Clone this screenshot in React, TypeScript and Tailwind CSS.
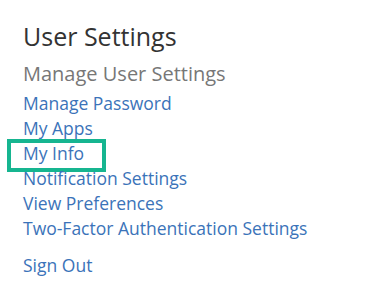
export default function App() {
  const links = [
    "Manage Password",
    "My Apps",
    "My Info",
    "Notification Settings",
    "View Preferences",
    "Two-Factor Authentication Settings",
  ];

  return (
    <div
      className="w-[392px] h-[295px] bg-white pl-[23px] pt-[21px]"
      style={{ fontFamily: '"Open Sans", "Noto Sans", sans-serif' }}
    >
      <h1 className="text-[25px] leading-[30px] text-[#333333] font-normal">User Settings</h1>
      <h2 className="mt-[9px] text-[20px] leading-[28px] text-[#777777] font-normal">
        Manage User Settings
      </h2>
      <ul className="mt-[3px] flex flex-col">
        {links.map((label) => (
          <li key={label} className="relative text-[17.5px] leading-[25px]">
            <a href="#" className="text-[#3b73b9]">
              {label}
            </a>
            {label === "My Info" && (
              <span className="absolute left-[-16px] top-[-2px] w-[99px] h-[33px] border-[4px] border-[#16b590] pointer-events-none" />
            )}
          </li>
        ))}
      </ul>
      <a href="#" className="block mt-[12px] text-[17.5px] leading-[25px] text-[#3b73b9]">
        Sign Out
      </a>
    </div>
  );
}
